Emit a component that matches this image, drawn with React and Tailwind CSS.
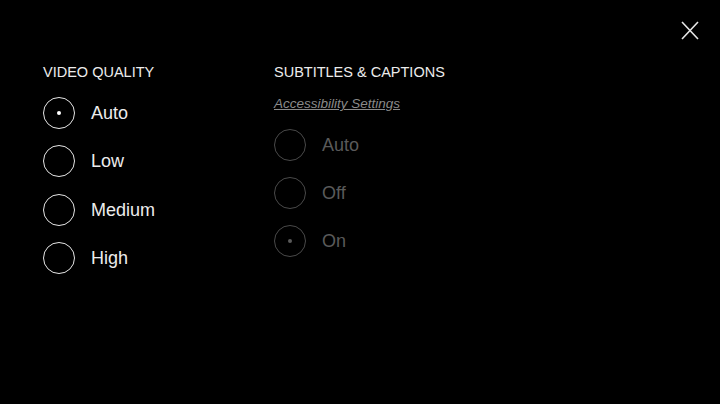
import { useState } from "react";

const QUALITY = ["Auto", "Low", "Medium", "High"];
const SUBS = ["Auto", "Off", "On"];

function Radio({ label, checked, disabled, onClick }) {
  return (
    <button
      onClick={onClick}
      disabled={disabled}
      className="flex items-center gap-[16px] h-[32px] text-left"
    >
      <span
        className={`w-[32px] h-[32px] rounded-full border-[1.5px] flex items-center justify-center shrink-0 ${
          disabled ? "border-[#4a4a4a]" : "border-[#e6e6e6]"
        }`}
      >
        {checked && (
          <span
            className={`w-[4px] h-[4px] rounded-full ${
              disabled ? "bg-[#5a5a5a]" : "bg-white"
            }`}
          />
        )}
      </span>
      <span
        className={`text-[18px] leading-none ${
          disabled ? "text-[#5a5a5a]" : "text-[#ececec]"
        }`}
      >
        {label}
      </span>
    </button>
  );
}

export default function App() {
  const [quality, setQuality] = useState("Auto");

  return (
    <div
      className="relative w-[720px] h-[404px] bg-black overflow-hidden"
      style={{ fontFamily: '"Liberation Sans", Arial, sans-serif' }}
    >
      {/* Close */}
      <button className="absolute left-[681px] top-[21px] w-[18px] h-[19px]">
        <svg viewBox="0 0 18 19" className="w-full h-full" fill="none" stroke="#e6e6e6" strokeWidth="1.6">
          <path d="M1 1 L17 18 M17 1 L1 18" />
        </svg>
      </button>

      <div className="flex pt-[62px] pl-[43px]">
        {/* Video quality */}
        <div className="w-[231px]">
          <h2 className="text-[14.5px] leading-[20px] text-[#ececec] uppercase">
            Video Quality
          </h2>
          <div className="flex flex-col gap-[16.4px] mt-[15px]">
            {QUALITY.map((q) => (
              <Radio
                key={q}
                label={q}
                checked={quality === q}
                onClick={() => setQuality(q)}
              />
            ))}
          </div>
        </div>

        {/* Subtitles */}
        <div>
          <h2 className="text-[14.5px] leading-[20px] text-[#ececec] uppercase">
            Subtitles &amp; Captions
          </h2>
          <a className="block mt-[14px] text-[13.5px] leading-[16px] italic underline text-[#8a8a8a] cursor-pointer">
            Accessibility Settings
          </a>
          <div className="flex flex-col gap-[16px] mt-[17px]">
            {SUBS.map((s) => (
              <Radio key={s} label={s} checked={s === "On"} disabled />
            ))}
          </div>
        </div>
      </div>
    </div>
  );
}
